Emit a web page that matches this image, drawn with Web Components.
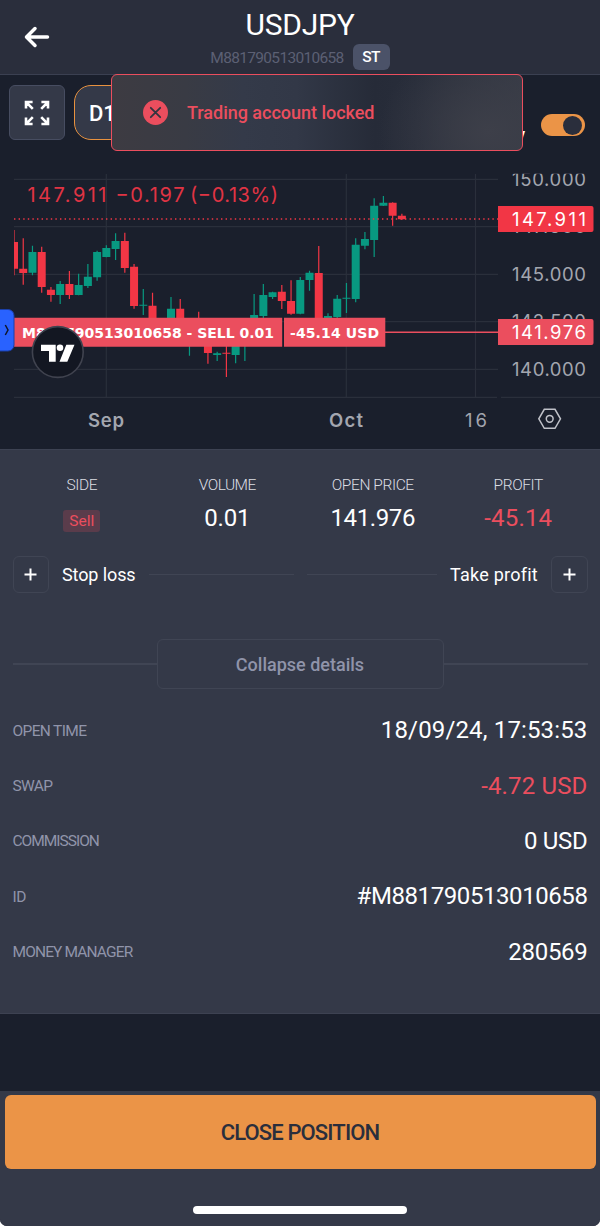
<!DOCTYPE html>
<html lang="en">
<head>
<meta charset="utf-8">
<title>USDJPY</title>
<style>
    body {
        margin: 0;
        background: #fff;
        font-family: Roboto, "Liberation Sans", sans-serif;
        color: #fff;
    }
</style>
</head>
<body>
<position-page>
    <page-header slot="header" symbol="USDJPY" account="M881790513010658" badge="ST"></page-header>
    <chart-toolbar slot="toolbar" interval="D1"></chart-toolbar>
    <price-chart slot="chart"></price-chart>
    <position-panel slot="panel">
        <stat-cell slot="stats" label="SIDE" style="--label-spacing:-.4px"><side-chip>Sell</side-chip></stat-cell>
        <stat-cell slot="stats" label="VOLUME" style="--label-spacing:-.55px; --value-spacing:-.2px">0.01</stat-cell>
        <stat-cell slot="stats" label="OPEN PRICE" style="--label-spacing:-.4px; --value-spacing:-.4px">141.976</stat-cell>
        <stat-cell slot="stats" label="PROFIT" style="--label-spacing:-.4px; --value-spacing:.2px" loss>-45.14</stat-cell>
        <order-level slot="levels" style="letter-spacing:-.1px">Stop loss</order-level>
        <order-level slot="levels" style="letter-spacing:.25px" end>Take profit</order-level>
        <detail-row label="OPEN TIME" style="--label-spacing:-.65px; --value-spacing:.15px">18/09/24, 17:53:53</detail-row>
        <detail-row label="SWAP" style="--label-spacing:-.7px; --value-spacing:.15px" loss>-4.72 USD</detail-row>
        <detail-row label="COMMISSION" style="--label-spacing:-1px; --value-spacing:-.3px">0 USD</detail-row>
        <detail-row label="ID" style="--label-spacing:-.5px; --value-spacing:-.42px">#M881790513010658</detail-row>
        <detail-row label="MONEY MANAGER" style="--label-spacing:-.87px; --value-spacing:-.3px">280569</detail-row>
    </position-panel>
    <action-footer slot="footer">CLOSE POSITION</action-footer>
    <toast-message slot="toast">Trading account locked</toast-message>
</position-page>

<script>
function define(name, render) {
    customElements.define(name, class extends HTMLElement {
        constructor() {
            super();
            this.attachShadow({ mode: 'open' });
        }

        connectedCallback() {
            this.shadowRoot.innerHTML = render(this);
        }
    });
}

define('position-page', () => `
    <style>
        :host {
            display: flex;
            flex-direction: column;
            position: relative;
            width: 600px;
            height: 1226px;
            background: #1a1f2c;
            border-radius: 0 0 7px 7px;
            overflow: hidden;
        }
        .gap { flex: 1; }
        .toast { position: absolute; left: 111px; top: 74px; }
    </style>
    <slot name="header"></slot>
    <slot name="toolbar"></slot>
    <slot name="chart"></slot>
    <slot name="panel"></slot>
    <div class="gap"></div>
    <slot name="footer"></slot>
    <div class="toast"><slot name="toast"></slot></div>
`);

define('page-header', el => `
    <style>
        :host {
            display: grid;
            grid-template-columns: 60px 1fr 60px;
            box-sizing: border-box;
            height: 75px;
            background: #2a2e3c;
            border-bottom: 1px solid #3b4051;
        }
        svg { display: block; margin: 25px 0 0 24px; }
        .title { text-align: center; font-size: 30px; line-height: 36px; margin-top: 7px; letter-spacing: -.25px; }
        .sub { display: flex; justify-content: center; align-items: center; gap: 9px; height: 24px; margin-top: 2px; }
        .account { font-size: 15.5px; line-height: 22px; padding-top: 2px; color: #5c6074; letter-spacing: -.68px; }
        .badge {
            width: 37px;
            line-height: 26px;
            text-align: center;
            border-radius: 6px;
            background: #4b5268;
            font-size: 15.5px;
            font-weight: 500;
            letter-spacing: -.5px;
        }
    </style>
    <svg width="27" height="24" fill="none" stroke="#fff" stroke-width="3.5" stroke-linecap="round" stroke-linejoin="round">
        <path d="M23.5 12H2.8M11 3.5 2.5 12 11 20.5"/>
    </svg>
    <div>
        <div class="title">${el.getAttribute('symbol')}</div>
        <div class="sub">
            <span class="account">${el.getAttribute('account')}</span>
            <span class="badge">${el.getAttribute('badge')}</span>
        </div>
    </div>
`);

define('chart-toolbar', el => `
    <style>
        :host { display: flex; align-items: flex-start; box-sizing: border-box; height: 85px; padding: 10px 15px 0 9px; }
        .btn {
            box-sizing: border-box;
            width: 56px;
            height: 55px;
            border: 1.5px solid #474d61;
            border-radius: 6px;
            background: #343948;
            display: grid;
            place-items: center;
        }
        .interval {
            box-sizing: border-box;
            width: 76px;
            height: 55px;
            margin-left: 9px;
            padding-left: 14px;
            border: 1.5px solid #e8923f;
            border-radius: 17px;
            background: #343948;
            font-size: 22px;
            font-weight: 500;
            line-height: 55px;
        }
        .rest { flex: 1; text-align: right; padding: 40px 16px 0 0; font-size: 18px; font-weight: 500; line-height: 20px; }
        .toggle {
            box-sizing: border-box;
            width: 44px;
            height: 22px;
            margin-top: 29px;
            padding: 1.5px;
            border-radius: 11px;
            background: #eb9447;
            display: flex;
            justify-content: flex-end;
        }
        .toggle i { width: 19px; height: 19px; border-radius: 50%; background: #2a2e3c; margin-right: 1.5px; }
    </style>
    <div class="btn">
        <svg width="26" height="26" viewBox="0 0 26 26" fill="none" stroke="#fff" stroke-width="2.6">
            <path d="M8.6 2H2V8.6M2 2 8.8 8.8M17.4 2H24V8.6M24 2 17.2 8.8M2 17.4V24H8.6M2 24 8.8 17.2M24 17.4V24H17.4M24 24 17.2 17.2"/>
        </svg>
    </div>
    <div class="interval">${el.getAttribute('interval')}</div>
    <div class="rest">y</div>
    <div class="toggle"><i></i></div>
`);

define('toast-message', () => `
    <style>
        :host {
            display: flex;
            align-items: center;
            box-sizing: border-box;
            width: 412px;
            height: 77px;
            padding-left: 31px;
            gap: 19px;
            border: 1.5px solid #eb4e5e;
            border-radius: 6px;
            background:
                radial-gradient(ellipse 110px 90px at 92% 75%, #3d3f49, transparent),
                linear-gradient(90deg, #3d3b42 0, #393b44 18%, #343a49 32%, #323847 45%, #262b38 64%, #282d3a 74%, #363a45 100%);
            color: #eb4e5e;
            font-size: 18px;
            font-weight: 500;
            letter-spacing: -.02px;
        }
        svg { flex: none; }
    </style>
    <svg width="25" height="25" viewBox="0 0 25 25">
        <circle cx="12.5" cy="12.5" r="12.5" fill="#eb4e5e"/>
        <path d="M7.8 7.8 17.2 17.2M17.2 7.8 7.8 17.2" stroke="#33343f" stroke-width="1.8" stroke-linecap="round"/>
    </svg>
    <span><slot></slot></span>
`);

// high, top, bottom, low in thirds of a pixel, then direction; null is covered by the position label
const CANDLES = [
    [210, 246, 326, 346, 'r'], [235, 326, 339, 374, 'r'], [257, 276, 338, 346, 'g'], [260, 276, 381, 398, 'r'],
    [381, 389, 405, 425, 'r'], [363, 372, 405, 432, 'g'], [333, 372, 405, 417, 'r'], [341, 375, 405, 406, 'g'],
    [312, 350, 378, 384, 'g'], [272, 276, 352, 362, 'g'], [256, 264, 291, 292, 'g'], [220, 243, 267, 300, 'g'],
    [218, 243, 324, 338, 'r'], [312, 320, 438, 446, 'r'], [387, 434, 437, 465, 'g'], [398, 437, 500, 510, 'r'],
    null, [411, 446, 500, 505, 'g'], [417, 446, 500, 505, 'r'], [500, 510, 540, 587, 'g'],
    [455, 490, 540, 550, 'r'], [500, 510, 579, 611, 'r'], [575, 580, 585, 603, 'g'], [540, 578, 581, 651, 'r'],
    [500, 510, 585, 610, 'g'], [500, 510, 540, 603, 'g'], [402, 465, 500, 510, 'g'], [372, 405, 468, 475, 'g'],
    [395, 397, 411, 417, 'g'], [375, 395, 423, 447, 'r'], [361, 423, 461, 464, 'r'], [351, 360, 461, 463, 'g'],
    [332, 338, 360, 392, 'g'], [258, 339, 480, 490, 'r'], [460, 468, 480, 490, 'g'], [405, 416, 471, 475, 'g'],
    [369, 413, 416, 459, 'g'], [235, 254, 417, 427, 'g'], [216, 237, 257, 268, 'g'], [115, 137, 240, 291, 'g'],
    [108, 128, 137, 138, 'g'], [127, 128, 167, 197, 'r'], [161, 167, 178, 180, 'r']
];

function candle(c, i) {
    if (!c) return '';
    const [high, top, bottom, low, dir] = c.map(v => typeof v === 'number' ? v / 3 : v);
    const x = 14 + i * 9.235;
    const fill = dir === 'g' ? '#089981' : '#f23645';
    return `<path fill="${fill}" d="M${x - .6} ${high}h1.2V${low}h-1.2zM${x - 4} ${top}h8V${bottom}h-8z"/>`;
}

define('price-chart', () => `
    <style>
        :host { display: block; height: 289px; }
        svg { display: block; font-family: Inter, "Liberation Sans", sans-serif; }
        .grid { stroke: #2a2f3b; stroke-width: 1.2; }
        .quote { font-size: 20px; fill: #e03444; }
        .scale { font-size: 18.5px; fill: #a3a6af; }
        .position { font: bold 14px "DejaVu Sans", sans-serif; fill: #fff; }
    </style>
    <svg width="600" height="289">
        <defs>
            <clipPath id="plot"><path d="M14 0H498V238H14z"/></clipPath>
            <clipPath id="axis"><path d="M498 13.8H600V238H498z"/></clipPath>
        </defs>
        <path class="grid" d="M14 19.3H498M14 66.7H498M14 114.3H498M14 161.7H498M14 209.3H498M14 237.4H497M501 237.4H600M106.3 14V237M346.3 14V237M475.5 14V237"/>
        <g clip-path="url(#plot)">${CANDLES.map(candle).join('')}</g>
        <path d="M14 59H498" stroke="#f23645" stroke-width="1.3" stroke-dasharray="1.4 3.2"/>
        <g class="quote">
            <text x="27.5" y="41.8" textLength="79">147.911</text>
            <text x="115.5" y="41.8" textLength="69">−0.197</text>
            <text x="190" y="41.8" textLength="88">(−0.13%)</text>
        </g>

        <g class="scale" clip-path="url(#axis)">
            <text x="512" y="26" textLength="74">150.000</text>
            <text x="512" y="73.3" textLength="74">147.500</text>
            <text x="512" y="120.9" textLength="74">145.000</text>
            <text x="512" y="168.3" textLength="74">142.500</text>
            <text x="512" y="215.9" textLength="74">140.000</text>
        </g>
        <g class="scale">
            <text x="88" y="266.6" font-weight="600" textLength="36">Sep</text>
            <text x="329" y="266.6" font-weight="600" textLength="34">Oct</text>
            <text x="465" y="266.6" textLength="22">16</text>
        </g>

        <path d="M385 172.3H498" stroke="#eb4e5e" stroke-width="1.5"/>
        <path d="M498 46h93.5a2 2 0 0 1 2 2v22a2 2 0 0 1-2 2H498z" fill="#f23645"/>
        <path d="M498 159h93.5a2 2 0 0 1 2 2v22a2 2 0 0 1-2 2H498z" fill="#eb4e5e"/>
        <g class="scale">
            <text x="512" y="65.8" style="fill:#fff" textLength="74">147.911</text>
            <text x="512" y="178.8" style="fill:#fff" textLength="74">141.976</text>
        </g>

        <path d="M14 157.7H282.2V186.7H14zM284 157.7H385.3V186.7H284z" fill="#eb4e5e"/>
        <g class="position">
            <text x="22" y="178.4" textLength="252">M881790513010658 - SELL 0.01</text>
            <text x="290" y="178.4" textLength="89">-45.14 USD</text>
        </g>

        <rect x="-6" y="149.5" width="20" height="41.5" rx="6" fill="#2962ff" stroke="#1b3fa8"/>
        <path d="M5.3 165 8 170 5.3 175" fill="none" stroke="#10162a" stroke-width="1.5"/>

        <circle cx="57.8" cy="192" r="25.4" fill="#131722" stroke="#40434f" stroke-width="1.6"/>
        <path d="M41 184.7H55.7V201.7H49V191H41zM66.3 184.7H74.5L67.3 201.7H59.5z" fill="#fff"/>
        <circle cx="60" cy="187.8" r="3.3" fill="#fff"/>

        <g fill="none" stroke="#c0c2c9" stroke-width="1.5">
            <path d="M544.3 249.3H555L560.5 258.8 555 268.3H544.3L538.8 258.8z"/>
            <circle cx="549.7" cy="258.8" r="3.4"/>
        </g>
    </svg>
`);

define('position-panel', () => `
    <style>
        :host {
            display: block;
            box-sizing: border-box;
            height: 565px;
            background: #343948;
            border: solid #3d4252;
            border-width: 1px 0;
        }
        .stats { display: grid; grid-template-columns: repeat(4, 1fr); height: 106px; padding: 0 9px; }
        .levels { display: grid; grid-template-columns: 281.5px 281px; gap: 12.5px; padding: 0 12.5px; }
        .collapse { display: flex; align-items: center; margin: 46.5px 12.5px 13.5px; }
        .collapse i { flex: 1; height: 1.5px; background: #404554; }
        .collapse span {
            box-sizing: border-box;
            width: 287px;
            height: 50px;
            border: 1.5px solid #404554;
            border-radius: 6px;
            color: #9094aa;
            text-align: center;
            font-size: 18px;
            font-weight: 500;
            line-height: 49px;
        }
    </style>
    <div class="stats"><slot name="stats"></slot></div>
    <div class="levels"><slot name="levels"></slot></div>
    <div class="collapse"><i></i><span>Collapse details</span><i></i></div>
    <slot></slot>
`);

define('stat-cell', el => `
    <style>
        :host { display: flex; flex-direction: column; align-items: center; padding-top: 25px; }
        .label { font-size: 15.5px; line-height: 20px; color: #dcdee4; font-weight: 300; letter-spacing: var(--label-spacing); }
        .value { font-size: 24px; line-height: 30px; margin-top: 8px; letter-spacing: var(--value-spacing); }
        :host([loss]) .value { color: #eb4e5e; }
    </style>
    <span class="label">${el.getAttribute('label')}</span>
    <span class="value"><slot></slot></span>
`);

define('side-chip', () => `
    <style>
        :host {
            display: block;
            width: 37px;
            margin-top: 7px;
            border-radius: 3px;
            background: #5a3c4b;
            color: #eb4e5e;
            font-size: 15.5px;
            line-height: 22px;
            text-align: center;
        }
    </style>
    <slot></slot>
`);

define('order-level', () => `
    <style>
        :host { display: flex; align-items: center; gap: 13px; font-size: 18px; }
        :host([end]) { flex-direction: row-reverse; }
        .add {
            box-sizing: border-box;
            width: 36.5px;
            height: 36.5px;
            border: 1.5px solid #404554;
            border-radius: 6px;
            display: grid;
            place-items: center;
        }
        i { flex: 1; height: 1.5px; background: #404554; }
    </style>
    <div class="add">
        <svg width="13" height="13" stroke="#fff" stroke-width="2"><path d="M.5 6.5H12.5M6.5 .5V12.5"/></svg>
    </div>
    <span><slot></slot></span>
    <i></i>
`);

define('detail-row', el => `
    <style>
        :host {
            display: flex;
            align-items: center;
            justify-content: space-between;
            height: 55.4px;
            padding: 0 12.5px;
        }
        .label { font-size: 15.5px; color: #9094aa; letter-spacing: var(--label-spacing); padding-top: 1px; }
        .value { font-size: 24px; letter-spacing: var(--value-spacing); }
        :host([loss]) .value { color: #eb4e5e; }
    </style>
    <span class="label">${el.getAttribute('label')}</span>
    <span class="value"><slot></slot></span>
`);

define('action-footer', () => `
    <style>
        :host {
            display: flex;
            flex-direction: column;
            align-items: center;
            box-sizing: border-box;
            height: 135px;
            padding: 4px 4.5px 0;
            background: #343948;
        }
        .close {
            align-self: stretch;
            height: 74px;
            border-radius: 6px;
            background: #eb9447;
            color: #2a2e3c;
            text-align: center;
            font-size: 22px;
            font-weight: 500;
            letter-spacing: -.87px;
            line-height: 76px;
        }
        .home { width: 214px; height: 8px; margin-top: 37px; border-radius: 4px; background: #fff; }
    </style>
    <div class="close"><slot></slot></div>
    <div class="home"></div>
`);
</script>
</body>
</html>
